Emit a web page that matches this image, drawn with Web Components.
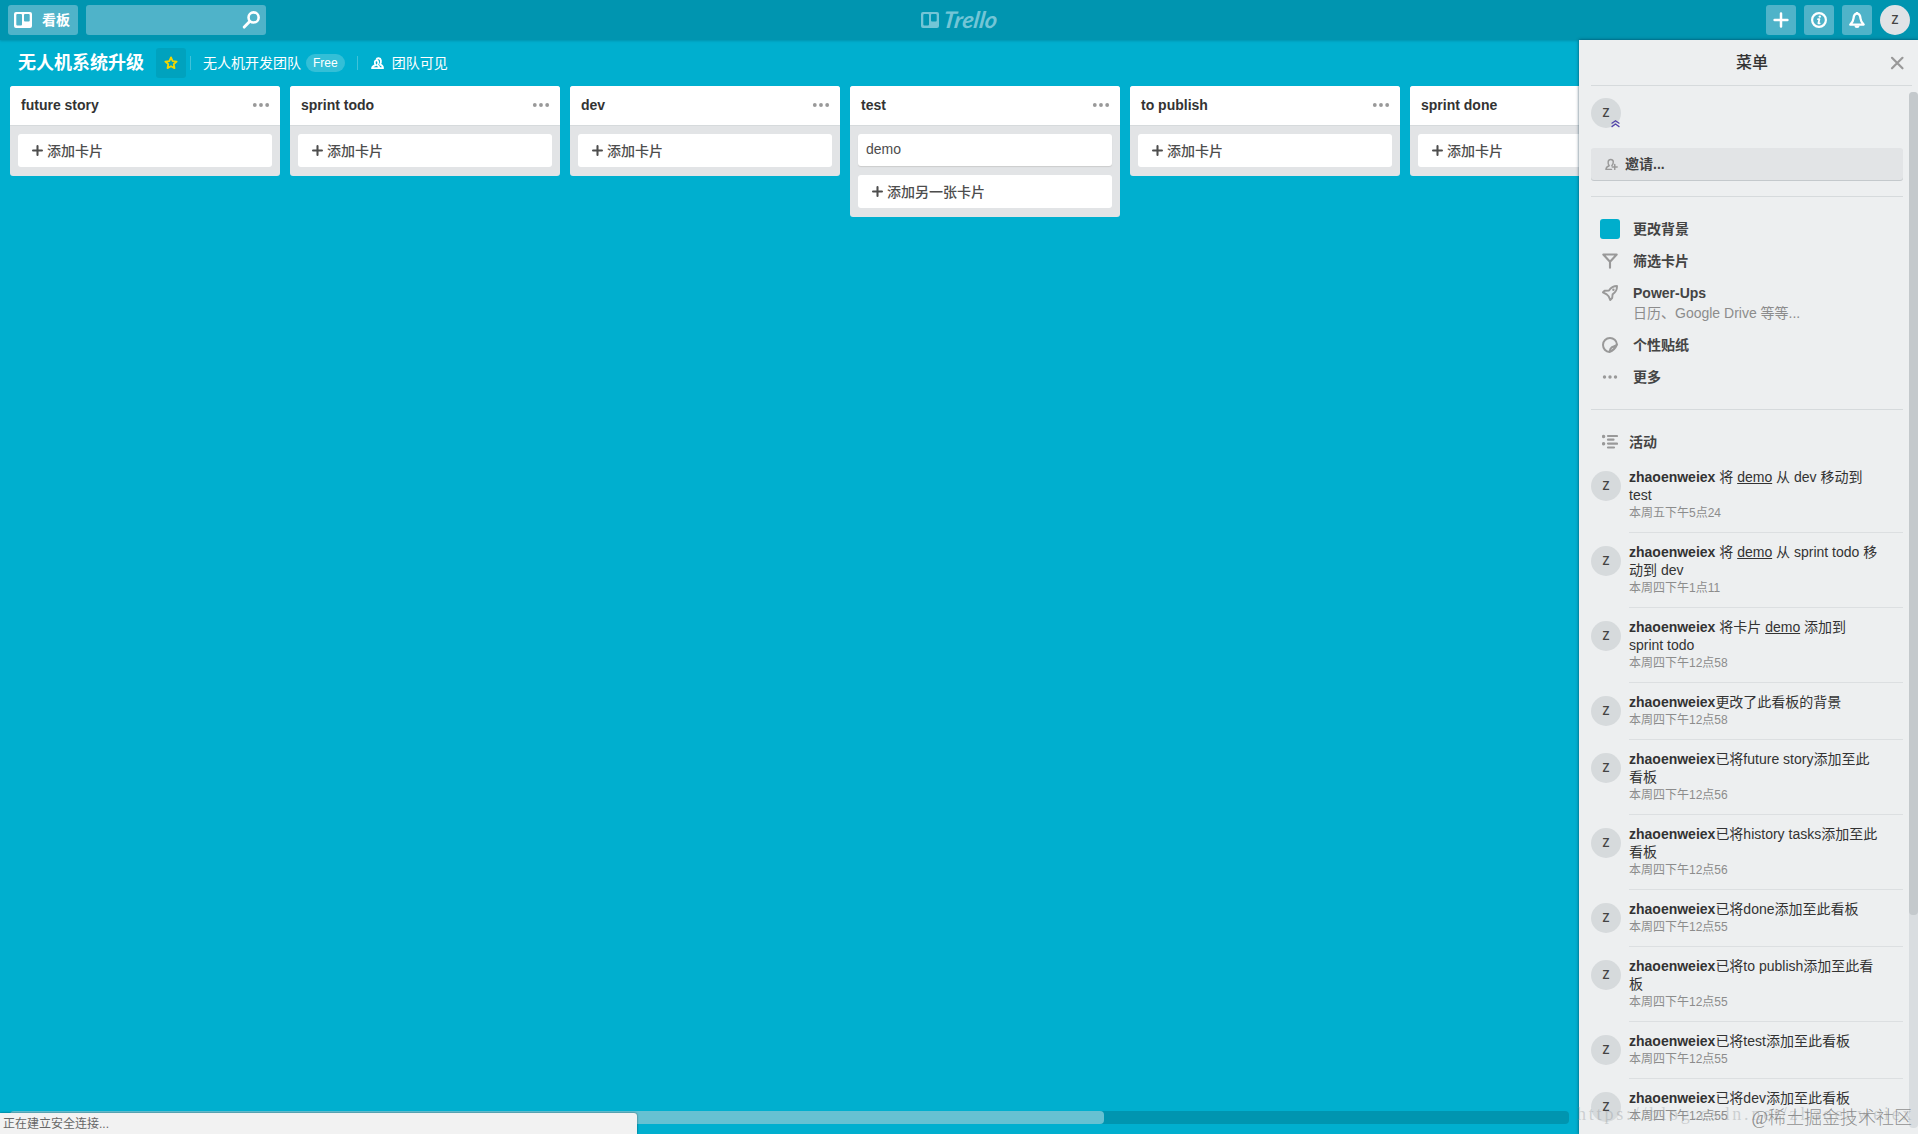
<!DOCTYPE html>
<html lang="zh-CN">
<head>
<meta charset="utf-8">
<title>无人机系统升级 | Trello</title>
<style>
  html, body { margin: 0; height: 100%; overflow: hidden; }
  body {
    font: 14px/18px "Liberation Sans", "Noto Sans CJK SC", sans-serif;
    color: #333;
  }
</style>
</head>
<body>
<trello-app></trello-app>

<script>
const ICONS = {
  board: `<path fill-rule="evenodd" d="M2 0h14a2 2 0 0 1 2 2v12a2 2 0 0 1-2 2H2a2 2 0 0 1-2-2V2a2 2 0 0 1 2-2zM3.300 2h3.700a1 1 0 0 1 1 1v9.500a1 1 0 0 1-1 1H3.300a1 1 0 0 1-1-1V3a1 1 0 0 1 1-1zM11 2h3.700a1 1 0 0 1 1 1v5.500a1 1 0 0 1-1 1H11a1 1 0 0 1-1-1V3a1 1 0 0 1 1-1z"/>`,
  search: `<g fill="none" stroke="currentColor"><circle cx="10.300" cy="5.700" r="4.500" stroke-width="2.300"/><path stroke-width="2.600" stroke-linecap="round" d="M6.800 9.300L2 14.300"/></g>`,
  plus: `<path fill="none" stroke="currentColor" stroke-width="2.500" stroke-linecap="round" d="M8 1.600v12.800M1.600 8h12.800"/>`,
  thickPlus: `<path fill="none" stroke="currentColor" stroke-width="3" stroke-linecap="round" d="M8 1.500v13M1.500 8h13"/>`,
  info: `<circle cx="8" cy="8" r="6.900" fill="none" stroke="currentColor" stroke-width="2.200"/><path fill="none" stroke="currentColor" stroke-width="1.800" stroke-linecap="round" stroke-linejoin="round" d="M7 7.200h1.400L7.400 11.300h1.300"/><circle cx="8.800" cy="4.600" r="1.200"/>`,
  bell: `<path fill="none" stroke="currentColor" stroke-width="2.300" stroke-linejoin="round" d="M8 1.600C5.200 1.600 4.700 4 4.500 6.500 4.300 9 3.500 10.500 1.300 12.600h13.400C12.500 10.500 11.700 9 11.500 6.500 11.300 4 10.800 1.600 8 1.600z"/><path d="M5.500 13.500h5a2.500 2.500 0 0 1-5 0zM7 0h2v2H7z"/>`,
  star: `<path fill="none" stroke="currentColor" stroke-width="2" stroke-linejoin="round" d="M8 1.600l1.900 4.200 4.600.5-3.400 3.100.9 4.500-4-2.300-4 2.300.9-4.500L1.500 6.300l4.600-.5z"/>`,
  team: `<g fill="none" stroke="currentColor" stroke-width="2.200" stroke-linejoin="round"><path d="M1.300 13.800h9c0-2.200-.8-3.200-2.600-3.900 1.300-1.300 1.500-3.200 1-4.500C8 3.400 5 3.600 4.700 5.800c-.2 1.600.1 3 1 4.100-2.700.6-4.200 1.700-4.400 3.900z"/><path d="M6.500 3.300C7.400.8 11.600.8 12.200 4.300c.3 2-.2 3.500-1.100 4.700 2.300.8 3.600 2.200 3.700 4.800h-4.500"/></g>`,
  invite: `<g fill="none" stroke="currentColor" stroke-width="1.800" stroke-linejoin="round" stroke-linecap="round"><path d="M8 14H1.200c0-2.400 1.500-3.700 4-4.500C3.800 8 3.600 6.400 3.900 4.500 4.500 1 9.700 1 10.200 4.500c.2 2-.3 3.300-1.800 4.900"/><path d="M12 8v6M9 11h6"/></g>`,
  filter: `<path fill="none" stroke="currentColor" stroke-width="2.100" stroke-linejoin="round" stroke-linecap="round" d="M1.300 1.500h13.400L8 8.800zM8 9v5.800"/>`,
  rocket: `<g fill="none" stroke="currentColor" stroke-width="1.900" stroke-linejoin="round"><path d="M7 5.600C9 2.400 11.500 1 15 1c.2 4-1.300 6.300-4.400 8.400l-.4 3.600-2 2-1.500-3.600-2-2L1 7.300l1.600-1.500z"/></g><circle cx="11.400" cy="4.700" r="1.200"/>`,
  sticker: `<path fill="none" stroke="currentColor" stroke-width="2" stroke-linejoin="round" d="M15 7.500c-1.500 3.500-4 6.200-7.500 7.500A7 7 0 1 1 15 7.500zM7.700 14.500c.2-2.200.5-3.300 2-4.200 1.800-1.100 4-.9 5.100-2.800"/>`,
  dots: `<circle cx="2.500" cy="8" r="1.700"/><circle cx="8" cy="8" r="1.700"/><circle cx="13.500" cy="8" r="1.700"/>`,
  activity: `<g fill="none" stroke="currentColor" stroke-width="2.200" stroke-linecap="round"><path d="M6 2h9M6 5.700h5.500M6 9.600h9M6 13.500h6"/></g><circle cx="1.600" cy="2.500" r="1.700"/><circle cx="1.600" cy="9.700" r="1.700"/>`,
  close: `<path fill="none" stroke="currentColor" stroke-width="2.200" stroke-linecap="round" d="M3 2.800l10.500 10.500M13.500 2.800L3 13.300"/>`,
  admin: `<path fill="none" stroke="currentColor" stroke-width="2.200" d="M1 8l7-5 7 5M1 14l7-5 7 5"/>`
};

const LISTS = [
  { name: "future story", cards: [] },
  { name: "sprint todo", cards: [] },
  { name: "dev", cards: [] },
  { name: "test", cards: ["demo"] },
  { name: "to publish", cards: [] },
  { name: "sprint done", cards: [] }
];

const ACTIVITY = [
  [" 将 <u>demo</u> 从 dev 移动到<br>test", "本周五下午5点24"],
  [" 将 <u>demo</u> 从 sprint todo 移<br>动到 dev", "本周四下午1点11"],
  [" 将卡片 <u>demo</u> 添加到<br>sprint todo", "本周四下午12点58"],
  ["更改了此看板的背景", "本周四下午12点58"],
  ["已将future story添加至此<br>看板", "本周四下午12点56"],
  ["已将history tasks添加至此<br>看板", "本周四下午12点56"],
  ["已将done添加至此看板", "本周四下午12点55"],
  ["已将to publish添加至此看<br>板", "本周四下午12点55"],
  ["已将test添加至此看板", "本周四下午12点55"],
  ["已将dev添加至此看板", "本周四下午12点55"]
];

const define = (name, style, body) => {
  window.customElements.define(name, class extends HTMLElement {
    connectedCallback() {
      if (this.shadowRoot)
        return;
      this.attachShadow({ mode: "open" });
      this.shadowRoot.innerHTML = `
        <style>* { box-sizing: border-box; }${style}</style>
        ${typeof body == "function" ? body(this) : body}`;
    }
  });
};

define("trello-icon", `
  :host { display: block; flex: none; width: 16px; height: 16px; }
  svg { display: block; width: 100%; height: 100%; fill: currentColor; }
`, el => {
  const name = el.getAttribute("name");
  return `<svg viewBox="0 0 ${name == "board" ? 18 : 16} 16">${ICONS[name]}</svg>`;
});

define("member-avatar", `
  :host {
    display: flex;
    flex: none;
    position: relative;
    align-items: center;
    justify-content: center;
    width: 30px;
    height: 30px;
    border-radius: 50%;
    background: #d6dadc;
    color: #444;
    font-size: 12px;
  }
  span { font-family: "Open Sans", sans-serif; font-weight: 600; }
  .badge {
    position: absolute;
    right: 1px;
    bottom: 0;
    width: 9px;
    height: 9px;
    color: #5243aa;
  }
`, el => `<span>Z</span>${el.hasAttribute("admin") ? `<trello-icon class=badge name=admin></trello-icon>` : ""}`);

define("header-button", `
  :host {
    display: flex;
    align-items: center;
    justify-content: center;
    width: 30px;
    height: 30px;
    border-radius: 3px;
    background: #4fb3c9;
    color: white;
    font-weight: bold;
  }
`, `<slot></slot>`);

define("trello-header", `
  :host {
    display: grid;
    grid-template-columns: 1fr auto 1fr;
    align-items: center;
    flex: none;
    height: 40px;
    padding: 0 8px;
    background: #0095b0;
    box-shadow: 0 1px 2px rgba(0, 120, 145, .5);
  }
  .left, .right { display: flex; gap: 8px; }
  .right { justify-content: flex-end; }
  .boards { width: 70px; gap: 10px; justify-content: flex-start; padding-left: 6px; }
  .boards trello-icon { width: 18px; }
  .search {
    display: flex;
    align-items: center;
    justify-content: flex-end;
    width: 180px;
    height: 30px;
    padding-right: 6px;
    border-radius: 3px;
    background: #4fb3c9;
    color: white;
  }
  .search trello-icon { width: 18px; height: 18px; }
  .logo {
    display: flex;
    align-items: center;
    gap: 2px;
    padding-left: 3px;
    color: #73c5d6;
  }
  .logo trello-icon { width: 18px; height: 18px; }
  .logo svg { display: block; }
  member-avatar { background: #dfe3e6; }
`, `
  <div class=left>
    <header-button class=boards><trello-icon name=board></trello-icon>看板</header-button>
    <div class=search><trello-icon name=search></trello-icon></div>
  </div>
  <div class=logo>
    <trello-icon name=board></trello-icon>
    <svg width="59" height="36"><text x="5" y="26" transform="skewX(-8)" textLength="54" lengthAdjust="spacingAndGlyphs" fill="currentColor" font-family="Lato" font-style="italic" font-weight="bold" font-size="23">Trello</text></svg>
  </div>
  <div class=right>
    <header-button><trello-icon name=plus></trello-icon></header-button>
    <header-button><trello-icon name=info></trello-icon></header-button>
    <header-button><trello-icon name=bell></trello-icon></header-button>
    <member-avatar></member-avatar>
  </div>
`);

define("board-header", `
  :host {
    display: flex;
    align-items: center;
    height: 46px;
    padding-left: 18px;
    color: white;
    white-space: nowrap;
  }
  .name { font-size: 18px; font-weight: bold; }
  .star {
    display: flex;
    align-items: center;
    justify-content: center;
    width: 30px;
    height: 30px;
    margin: 0 4px 0 12px;
    border-radius: 3px;
    background: #00a2be;
    color: #f2d600;
  }
  .star trello-icon { width: 14px; height: 14px; }
  .rule { width: 1px; height: 14px; background: #40c2d9; }
  .team { margin: 0 5px 0 12px; }
  .plan {
    height: 18px;
    padding: 0 7px;
    margin-right: 12px;
    border-radius: 9px;
    background: #33bfd7;
    font-size: 12px;
  }
  .visibility { display: flex; align-items: center; gap: 8px; padding-left: 13px; }
  .visibility trello-icon { width: 13px; height: 13px; }
`, `
  <div class=name>无人机系统升级</div>
  <div class=star><trello-icon name=star></trello-icon></div>
  <div class=rule></div>
  <div class=team>无人机开发团队</div>
  <div class=plan>Free</div>
  <div class=rule></div>
  <div class=visibility><trello-icon name=team></trello-icon>团队可见</div>
`);

define("board-card", `
  :host {
    display: block;
    height: 32px;
    padding: 6px 8px;
    border-radius: 3px;
    background: white;
    box-shadow: 0 1px 1px #ccc;
    color: #4d4d4d;
  }
`, `<slot></slot>`);

define("board-list", `
  :host {
    display: flex;
    flex: none;
    flex-direction: column;
    width: 270px;
    border-radius: 3px;
    overflow: hidden;
    background: #e2e4e6;
  }
  .title {
    display: flex;
    align-items: center;
    justify-content: space-between;
    height: 40px;
    padding: 0 10px 1px 11px;
    border-bottom: 1px solid #d6dadc;
    background: white;
    font-weight: bold;
  }
  .title trello-icon { width: 18px; height: 18px; color: #999; }
  .cards {
    display: flex;
    flex-direction: column;
    gap: 9px;
    padding: 8px 8px 9px;
  }
  .add {
    display: flex;
    align-items: center;
    gap: 4px;
    height: 33px;
    padding: 0 14px;
    border-radius: 3px;
    background: white;
    color: #4d4d4d;
    font-weight: 500;
  }
  .add trello-icon { width: 11px; height: 11px; }
`, el => `
  <div class=title>${el.getAttribute("name")}<trello-icon name=dots></trello-icon></div>
  <div class=cards>
    <slot></slot>
    <div class=add><trello-icon name=thickPlus></trello-icon>${el.children.length ? "添加另一张卡片" : "添加卡片"}</div>
  </div>
`);

define("menu-item", `
  :host {
    display: flex;
    gap: 13px;
    padding: 7px 9px 7px;
    color: #444;
  }
  .icon {
    display: flex;
    justify-content: center;
    align-items: center;
    width: 20px;
    height: 18px;
    color: #999;
  }
  .swatch { flex: none; width: 20px; height: 20px; border-radius: 3px; background: #00aecc; }
  .label { font-weight: bold; }
  ::slotted(*) { padding-top: 2px; color: #8c8c8c; }
`, el => `
  <div class=icon>${el.hasAttribute("icon")
    ? `<trello-icon name=${el.getAttribute("icon")}></trello-icon>`
    : `<div class=swatch></div>`}</div>
  <div><div class=label>${el.getAttribute("label")}</div><slot></slot></div>
`);

define("activity-entry", `
  :host { display: flex; gap: 8px; }
  member-avatar { margin-top: 13px; }
  .text {
    flex: 1;
    padding: 10px 0;
    border-bottom: 1px solid #dcdfe1;
    white-space: nowrap;
  }
  .time { color: #8c8c8c; font-size: 12px; }
`, el => `
  <member-avatar></member-avatar>
  <div class=text>
    <div><b>zhaoenweiex</b><slot></slot></div>
    <div class=time>${el.getAttribute("time")}</div>
  </div>
`);

define("board-menu", `
  :host {
    display: flex;
    position: relative;
    flex: none;
    flex-direction: column;
    width: 339px;
    overflow: hidden;
    background: #edeff0;
    box-shadow: 0 0 3px rgba(0, 40, 60, .7);
  }
  .title {
    display: grid;
    grid-template-columns: 16px 1fr 16px;
    align-items: center;
    flex: none;
    height: 46px;
    margin: 0 6px 0 12px;
    padding: 0 7px 0 8px;
    border-bottom: 1px solid #d6dadc;
    font-size: 16px;
    font-weight: 500;
    text-align: center;
  }
  .title trello-icon { color: #999; }
  .scroll { display: flex; flex: 1; min-height: 0; justify-content: space-between; }
  .content { width: 312px; margin-left: 12px; padding-top: 12px; }
  .invite {
    display: flex;
    align-items: center;
    gap: 7px;
    height: 32px;
    margin: 20px 0 16px;
    padding-left: 14px;
    border-radius: 3px;
    background: #e2e4e6;
    box-shadow: 0 1px 0 #c4c9cc;
    color: #444;
    font-weight: bold;
  }
  .invite trello-icon { width: 13px; height: 13px; color: #999; }
  .items { padding: 16px 0; border: solid #d6dadc; border-width: 1px 0; }
  .heading {
    display: flex;
    align-items: center;
    gap: 11px;
    height: 18px;
    margin: 23px 0 7px 11px;
    color: #444;
    font-weight: bold;
  }
  .heading trello-icon { color: #999; }
  .track { width: 9px; height: 1036px; margin-top: 6px; border-radius: 4px; background: #d9dde0; }
  .thumb { height: 823px; border-radius: 4px; background: #c4c9cc; }
`, `
  <div class=title><span></span><span>菜单</span><trello-icon name=close></trello-icon></div>
  <div class=scroll>
    <div class=content>
      <member-avatar admin></member-avatar>
      <div class=invite><trello-icon name=invite></trello-icon>邀请...</div>
      <div class=items>
        <menu-item label="更改背景"></menu-item>
        <menu-item icon=filter label="筛选卡片"></menu-item>
        <menu-item icon=rocket label="Power-Ups"><div>日历、Google Drive 等等...</div></menu-item>
        <menu-item icon=sticker label="个性贴纸"></menu-item>
        <menu-item icon=dots label="更多"></menu-item>
      </div>
      <div class=heading><trello-icon name=activity></trello-icon>活动</div>
      ${ACTIVITY.map(([text, time]) => `<activity-entry time="${time}">${text}</activity-entry>`).join("")}
    </div>
    <div class=track><div class=thumb></div></div>
  </div>
`);

define("trello-app", `
  :host {
    display: flex;
    position: relative;
    flex-direction: column;
    height: 100vh;
    overflow: hidden;
    background: #00afcf;
  }
  .main { display: flex; flex: 1; min-height: 0; }
  .board { display: flex; flex: 1; flex-direction: column; min-width: 0; overflow: hidden; }
  .lists { display: flex; flex: 1; align-items: flex-start; gap: 10px; padding-left: 10px; }
  .scrollbar {
    flex: none;
    height: 13px;
    margin: 0 10px 10px;
    border-radius: 4px;
    background: #0095b0;
  }
  .thumb { width: 1094px; height: 13px; border-radius: 4px; background: #66c1d2; }
  .status {
    position: absolute;
    left: 0;
    bottom: 0;
    width: 637px;
    height: 21px;
    padding-left: 3px;
    border-top-right-radius: 3px;
    background: #f2f2f2;
    box-shadow: 0 0 2px rgba(0, 0, 0, .6);
    color: #666;
    font-size: 12px;
    line-height: 23px;
  }
  /* marks stamped over the bottom of the menu */
  .url, .credit { position: absolute; white-space: nowrap; }
  .url {
    left: 1577px;
    bottom: 10px;
    color: rgba(140, 145, 150, .35);
    font: 18px/20px "Liberation Serif", serif;
    letter-spacing: 2.800px;
  }
  .credit {
    right: 6px;
    bottom: 5px;
    color: rgba(125, 125, 125, .85);
    font: 300 18px/22px "Liberation Serif", "Noto Sans CJK SC", serif;
  }
`, `
  <trello-header></trello-header>
  <div class=main>
    <div class=board>
      <board-header></board-header>
      <div class=lists>
        ${LISTS.map(list => `<board-list name="${list.name}">${
          list.cards.map(card => `<board-card>${card}</board-card>`).join("")
        }</board-list>`).join("")}
      </div>
      <div class=scrollbar><div class=thumb></div></div>
    </div>
    <board-menu></board-menu>
  </div>
  <div class=status>正在建立安全连接...</div>
  <div class=url>https://blog.csdn.net/zhaoenweiex</div>
  <div class=credit>@稀土掘金技术社区</div>
`);
</script>
</body>
</html>
